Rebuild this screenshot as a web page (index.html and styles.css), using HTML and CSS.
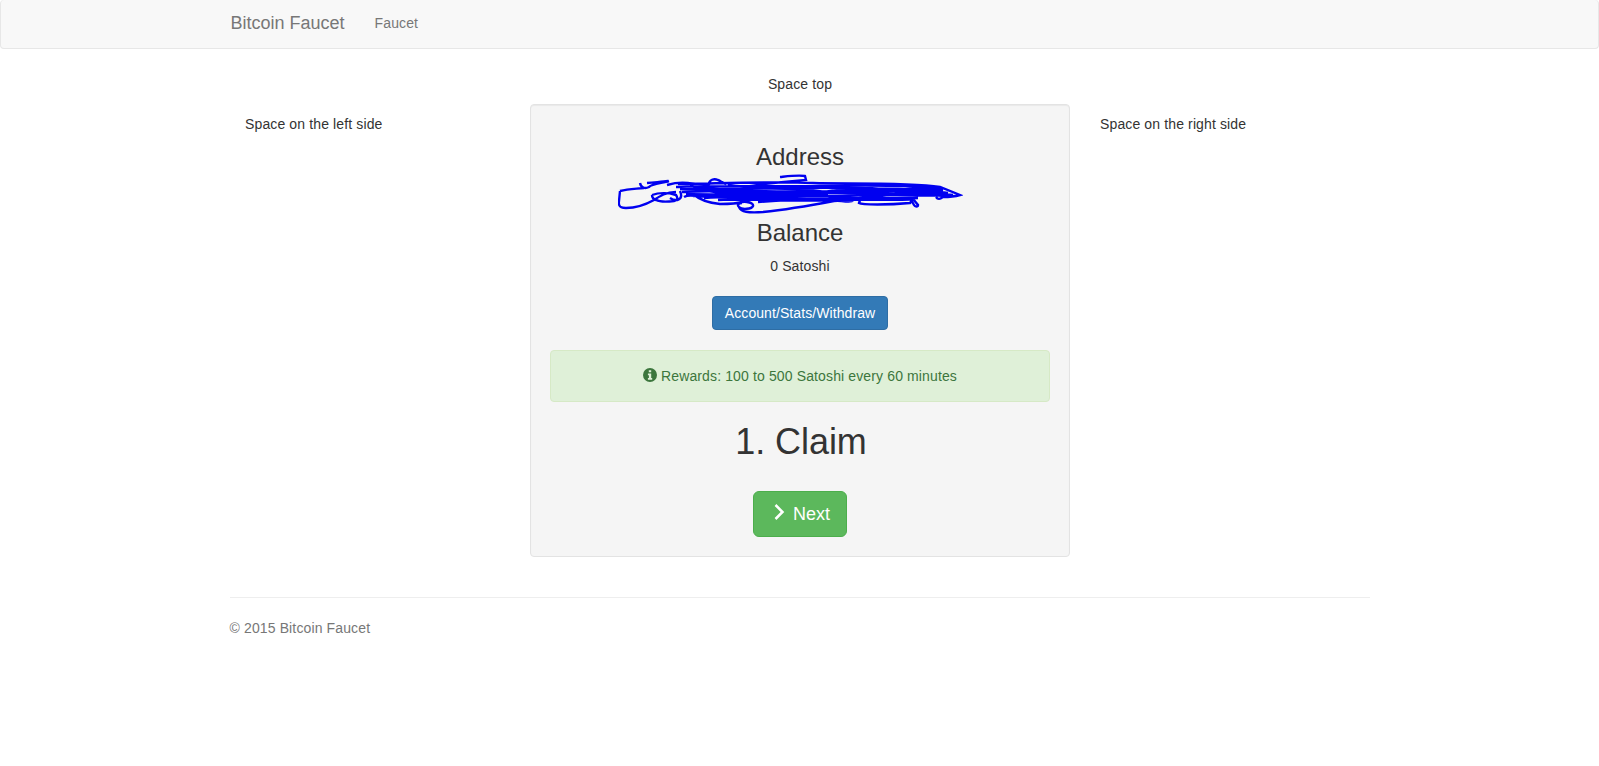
FILE: index.html
```html
<!DOCTYPE html>
<html lang="en">
<head>
<meta charset="utf-8">
<title>Bitcoin Faucet</title>
<link rel="stylesheet" href="styles.css">
</head>
<body>
<nav class="navbar">
  <div class="container nav-inner">
    <a class="brand">Bitcoin Faucet</a>
    <a class="nav-link">Faucet</a>
  </div>
</nav>
<div class="container">
  <p class="space-top">Space top</p>
  <div class="columns">
    <div class="side">Space on the left side</div>
    <div class="center">
      <div class="well">
        <h3 class="heading first">Address</h3>
        <svg class="scribble" viewBox="0 0 345 40" aria-hidden="true">
          <path d="M2 17 L.8 29 C1 33 3 34 8 34 C18 34 27 31 36 26 C42 22 48 18 58 18 M2 17 C10 15 16 15 26 14 M22 9 C23 14 27 15 31 13 C33 10 45 9 51 7 M29 9 C38 8 44 8 50 7 M49 11 C56 9 63 8 70 9 C78 10 84 11 91 10 C91 6 96 4 100 6 C103 7 104 9 108 10 M34 21 C42 18 52 19 58 21 C60 24 60 26 56 27 C48 28 42 28 38 26 C35 25 34 23 34 21 M62 17 C66 26 58 28 52 24 M75 20 C82 26 90 29 102 30 C110 30 118 30 124 28 C128 27 136 29 135 32 C134 35 124 36 121 33 C119 31 120 29 124 29 M121 33 C123 38 130 39 145 38 C165 36 195 31 216 27 C228 26 232 30 236 26 M242 26 L241 29 C244 31 270 31 292 29 L295 25 L300 31 C300 33 297 33 296 31 L292 24 M162 3 C172 2 180 1 187 2 L188 6 C176 7 165 8 155 9 C145 10 135 12 125 13 M60 10 C90 10 150 7 195 9 C230 10 290 8 322 13 L342 21 C335 23 328 23 325 23 C322 25 320 26 318 23 M58 13 C100 11 160 13 210 12 C250 11 290 11 325 15 M62 15 C110 16 170 13 230 14 C270 15 300 14 330 19 M64 18 C110 15 170 19 230 17 C270 16 305 18 335 21 M68 20 C120 22 170 17 240 19 C275 20 305 20 328 22 M75 22 C120 19 180 24 240 21 C270 20 300 23 322 21 M86 24 C130 21 170 26 225 24 C260 23 280 25 300 24 M90 17 C130 24 175 13 220 24 C250 27 285 15 315 19 M110 11 C150 17 190 9 235 16 C270 20 300 10 325 17 M95 21 C140 13 175 25 225 15 C255 10 285 21 320 14 M72 12 C110 20 150 10 200 17 C240 23 260 12 310 20 M130 26 C160 24 195 27 230 25 M118 25 C150 18 180 22 210 20 M100 26 C140 24 170 28 215 26 C250 25 275 27 296 25 M140 28 C170 26 200 24 240 24 M66 23 C72 19 80 24 92 22" />
        </svg>
        <h3 class="heading">Balance</h3>
        <p class="balance">0 Satoshi</p>
        <a class="btn btn-primary">Account/Stats/Withdraw</a>
        <div class="alert">
          <svg class="info-icon" viewBox="0 0 14 14" aria-hidden="true"><path d="M7 0a7 7 0 1 0 0 14A7 7 0 0 0 7 0zM5.800 2.200h2.400v2.100H5.800zM4.900 5.600h3.300v4.500h1v1.700H4.900v-1.700h1V7.300h-1z" fill-rule="evenodd"/></svg>
          Rewards: 100 to 500 Satoshi every 60 minutes
        </div>
        <h1 class="claim">1. Claim</h1>
        <a class="btn btn-success">
          <svg class="chevron" viewBox="0 0 18 18" aria-hidden="true"><path d="M5.500 2 L12.500 9 L5.500 16"/></svg>
          Next
        </a>
      </div>
    </div>
    <div class="side">Space on the right side</div>
  </div>
  <hr class="rule">
  <footer class="footer">© 2015 Bitcoin Faucet</footer>
</div>
</body>
</html>
```
FILE: styles.css
```css
* { box-sizing: border-box; }
html, body { margin: 0; }
body {
  font-family: "Liberation Sans", Arial, sans-serif;
  font-size: 14px;
  line-height: 20px;
  letter-spacing: .13px;
  color: #333;
  background: #fff;
}
.container { width: 1170px; margin: 0 auto; padding: 0 15px; }
.navbar {
  height: 49px;
  margin-bottom: 20px;
  background: #f8f8f8;
  border: 1px solid #e7e7e7;
  border-top: 0;
  border-radius: 4px;
}
.nav-inner { display: flex; align-items: center; height: 45px; }
.brand { padding-left: 1px; font-size: 18px; letter-spacing: 0; color: #777; margin-right: 30px; }
.nav-link { color: #777; }
.space-top { margin: 0 0 10px; padding-top: 5px; padding-left: 1px; text-align: center; }
.columns { display: grid; grid-template-columns: 1fr 2fr 1fr; }
.side { padding: 10px 15px 0 15.5px; }
.center { padding: 0 15px; }
.well {
  min-height: 453px;
  padding: 19px;
  background: #f5f5f5;
  border: 1px solid #e3e3e3;
  border-radius: 4px;
  box-shadow: inset 0 1px 1px rgba(0,0,0,.05);
  text-align: center;
}
.heading { margin: 0; padding-left: 1px; font-size: 24px; font-weight: 500; line-height: 26px; letter-spacing: 0; }
.heading.first { margin-top: 20px; }
.scribble {
  display: block;
  width: 345px;
  height: 40px;
  margin: 4px 0 6px 68px;
  fill: none;
  stroke: #0000f0;
  stroke-width: 2.400;
}
.balance { margin: 10px 0 20px; padding-left: 1px; }
.btn {
  display: inline-block;
  margin-left: 1px;
  color: #fff;
  border: 1px solid;
  text-align: center;
}
.btn-primary {
  padding: 6px 12px;
  letter-spacing: .08px;
  background: #337ab7;
  border-color: #2e6da4;
  border-radius: 4px;
}
.alert {
  display: block;
  margin-top: 20px;
  padding: 15px 15px 15px 16px;
  color: #3c763d;
  background: #dff0d8;
  border: 1px solid #d6e9c6;
  border-radius: 4px;
}
.info-icon { width: 14px; height: 14px; fill: #3c763d; vertical-align: -1px; }
.claim { margin: 20px 0 29px; padding-left: 3px; font-size: 36px; font-weight: 500; line-height: 40px; letter-spacing: -.05px; }
.btn-success {
  padding: 10px 16px;
  font-size: 18px;
  line-height: 24px;
  letter-spacing: 0;
  background: #5cb85c;
  border-color: #4cae4c;
  border-radius: 6px;
}
.chevron { width: 18px; height: 18px; fill: none; stroke: #fff; stroke-width: 2.500; vertical-align: -1px; }
.rule { margin: 40px 0 20px; border: 0; border-top: 1px solid #eee; }
.footer { color: #777; }
```
